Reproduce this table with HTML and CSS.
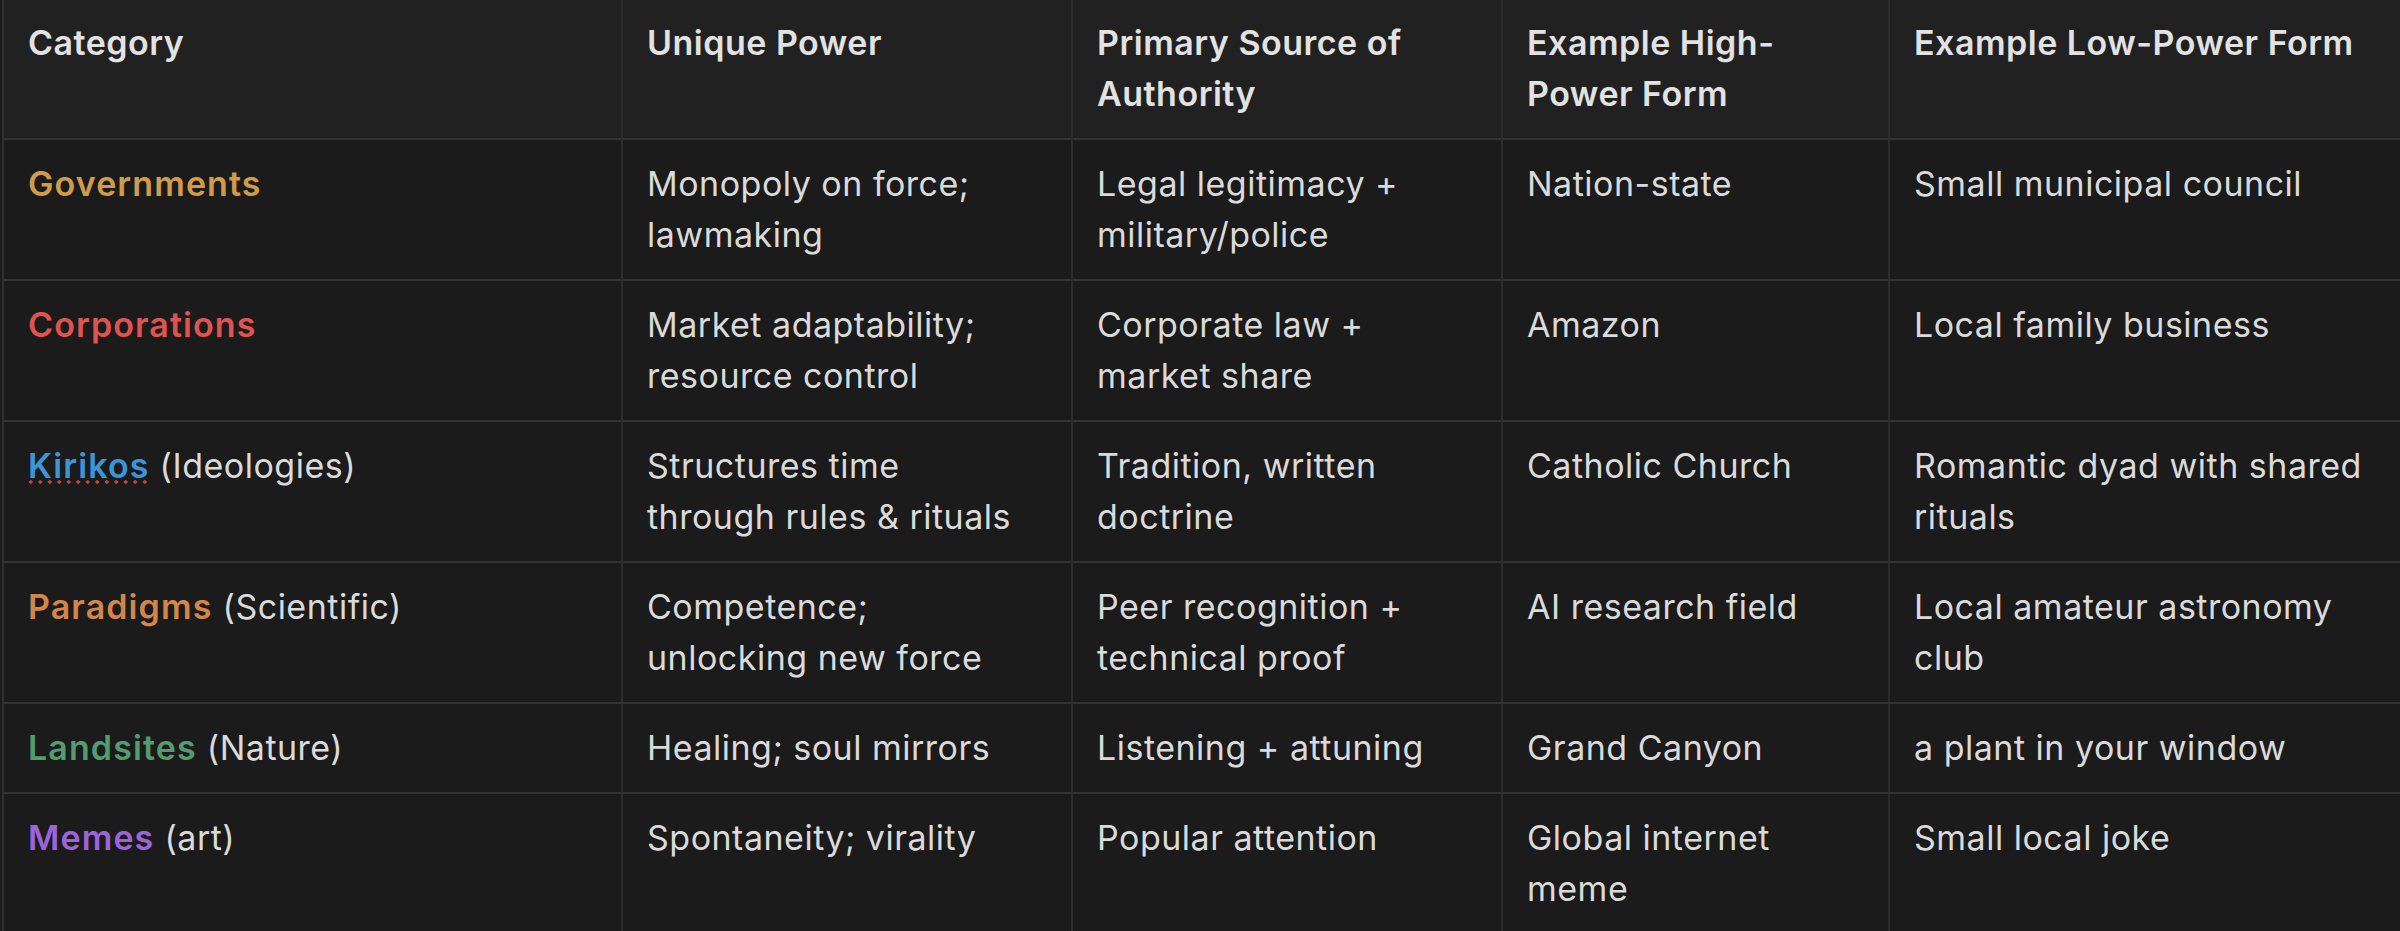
FILE: index.html
```html
<!DOCTYPE html>
<html lang="en">
<head>
<meta charset="utf-8">
<title>Categories of power</title>
<link rel="stylesheet" href="styles.css">
</head>
<body>
<table class="power-table">
  <colgroup>
    <col class="c1"><col class="c2"><col class="c3"><col class="c4"><col class="c5">
  </colgroup>
  <thead>
    <tr>
      <th>Category</th>
      <th class="narrow">Unique Power</th>
      <th>Primary Source of Authority</th>
      <th>Example High-Power Form</th>
      <th>Example Low-Power Form</th>
    </tr>
  </thead>
  <tbody>
    <tr>
      <td><strong class="tag gov">Governments</strong></td>
      <td class="narrow">Monopoly on force; lawmaking</td>
      <td>Legal legitimacy + military/police</td>
      <td>Nation-state</td>
      <td>Small municipal council</td>
    </tr>
    <tr>
      <td><strong class="tag corp">Corporations</strong></td>
      <td class="narrow">Market adaptability; resource control</td>
      <td>Corporate law + market share</td>
      <td>Amazon</td>
      <td>Local family business</td>
    </tr>
    <tr>
      <td><strong class="tag kir"><span class="spell">Kirikos</span></strong> (Ideologies)</td>
      <td class="narrow">Structures time through rules &amp; rituals</td>
      <td>Tradition, written doctrine</td>
      <td>Catholic Church</td>
      <td>Romantic dyad with shared rituals</td>
    </tr>
    <tr>
      <td><strong class="tag para">Paradigms</strong> (Scientific)</td>
      <td class="narrow">Competence; unlocking new force</td>
      <td>Peer recognition + technical proof</td>
      <td>AI research field</td>
      <td>Local amateur astronomy club</td>
    </tr>
    <tr>
      <td><strong class="tag land">Landsites</strong> (Nature)</td>
      <td class="narrow">Healing; soul mirrors</td>
      <td>Listening + attuning</td>
      <td>Grand Canyon</td>
      <td>a plant in your window</td>
    </tr>
    <tr>
      <td><strong class="tag meme">Memes</strong> (art)</td>
      <td class="narrow">Spontaneity; virality</td>
      <td>Popular attention</td>
      <td>Global internet meme</td>
      <td>Small local joke</td>
    </tr>
  </tbody>
</table>
</body>
</html>
```

FILE: styles.css
```css
html, body {
  margin: 0;
  padding: 0;
  overflow: hidden;
  background: #1b1b1b;
}

body {
  padding-left: 2px;
  font-family: Inter, "Noto Sans", sans-serif;
  font-size: 34px;
  line-height: 51px;
  letter-spacing: 0.5px;
  color: #dadada;
}

.power-table {
  table-layout: fixed;
  border-collapse: separate;
  border-spacing: 0;
  border-left: 2px solid #303030;
  width: 2418px;
}

.c1 { width: 619px; }
.c2 { width: 450px; }
.c3 { width: 430px; }
.c4 { width: 387px; }
.c5 { width: 530px; }

.power-table th,
.power-table td {
  text-align: left;
  vertical-align: top;
  padding: 18.5px 24px;
  border-right: 2px solid #2c2c2c;
  border-bottom: 2px solid #333333;
}

.power-table .narrow {
  padding-right: 44px;
}

.power-table th {
  padding-top: 17px;
  background: #212121;
  font-weight: 600;
  color: #e2e2e2;
}

.power-table td {
  background: #1b1b1b;
  font-weight: 400;
}

.tag {
  font-weight: 600;
  letter-spacing: 1.1px;
}
.gov { color: #d09b4b; }
.corp { color: #e05450; }
.kir { color: #3a96d9; }
.para { color: #d4864a; }
.land { color: #529c6e; }
.meme { color: #9d64d9; }

.spell {
  background-image: radial-gradient(circle, #c4433f 1.5px, transparent 1.9px);
  background-repeat: repeat-x;
  background-size: 9.5px 6px;
  background-position: -2px calc(100% - 1px);
}
```
